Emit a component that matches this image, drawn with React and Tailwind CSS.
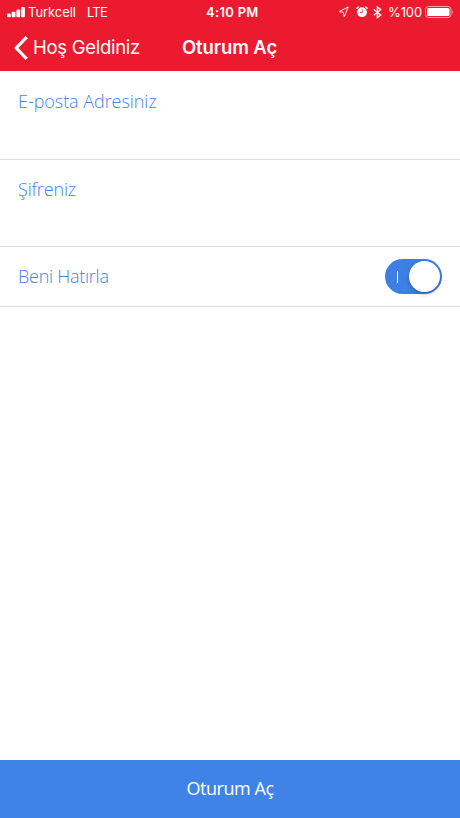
function StatusBar() {
  return (
    <div className="flex h-6 items-center pl-[7px] pr-[4px] text-[13px] leading-6">
      <svg className="mr-[3px] h-[11px] w-[18px] shrink-0" viewBox="0 0 18 11" fill="white">
        <rect x="0" y="6.5" width="3.8" height="3.8" rx="1" />
        <rect x="4.7" y="4.8" width="3.8" height="5.5" rx="1" />
        <rect x="9.4" y="2.6" width="3.8" height="7.7" rx="1" />
        <rect x="14.1" y="0" width="3.8" height="10.3" rx="1" />
      </svg>
      <span className="w-[59px] whitespace-nowrap tracking-[-0.05px]">Turkcell</span>
      <span className="w-[119px] tracking-[-0.8px]">LTE</span>
      <span className="w-[132px] whitespace-nowrap font-semibold tracking-[0.3px]">4:10 PM</span>
      <svg className="h-[12px] w-[11px] shrink-0" viewBox="0 0 11 12" fill="none" stroke="white" strokeWidth="1" strokeLinejoin="round">
        <path d="M10.2 1 L1 5.6 L5.2 6.3 L6.3 10.6 Z" />
      </svg>
      <svg className="ml-[7px] h-[12px] w-[12px] shrink-0" viewBox="0 0 12 12">
        <circle cx="6" cy="6.2" r="4.9" fill="white" />
        <path d="M0.9 2.2 L2.3 1 M11.1 2.2 L9.7 1" stroke="white" strokeWidth="1.4" strokeLinecap="round" />
        <path d="M6.2 3.2 V6.5 H3.9" stroke="#ec1a2e" strokeWidth="0.8" fill="none" />
      </svg>
      <svg className="ml-[5px] h-[13px] w-[9px] shrink-0" viewBox="0 0 9 13" fill="none" stroke="white" strokeWidth="1.35">
        <path d="M0.8 3.4 L7.7 9 L4.4 11.6 V1 L7.7 3.6 L0.8 9.2" />
      </svg>
      <span className="ml-[6px] w-[37px] whitespace-nowrap tracking-[-0.1px]">%100</span>
      <svg className="h-[12px] w-[29px] shrink-0" viewBox="0 0 29 12" fill="none">
        <rect x="0.5" y="0.5" width="25.5" height="11" rx="3" stroke="white" strokeOpacity="0.6" />
        <rect x="2" y="2" width="22.5" height="8" rx="1.6" fill="white" />
        <path d="M27.3 4 Q28.8 6 27.3 8 Z" fill="white" fillOpacity="0.7" />
      </svg>
    </div>
  );
}

export default function App() {
  return (
    <div className="flex h-[818px] w-[460px] flex-col overflow-hidden bg-white font-['Open_Sans',sans-serif] text-[18px] font-light text-[#4583e4]">
      <header className="h-[71px] shrink-0 bg-[#ec1a2e] font-['Inter',sans-serif] font-normal text-white">
        <StatusBar />
        <div className="flex h-[47px] items-center pl-[14px]">
          <svg className="h-6 w-[14px] shrink-0" viewBox="0 0 14 24" fill="none" stroke="white" strokeWidth="3.2">
            <path d="M12.7 1.2 L2.3 12 L12.7 22.8" />
          </svg>
          <span className="ml-[5px] w-[149px] whitespace-nowrap text-[18.5px] tracking-[-0.28px]">Hoş Geldiniz</span>
          <h1 className="whitespace-nowrap text-[18.5px] font-semibold tracking-[-0.1px]">Oturum Aç</h1>
        </div>
      </header>
      <main className="flex-1">
        <label className="block h-[89px] border-b border-[#d3e1f7] pl-[18px] pt-[18px] leading-6 tracking-[-0.05px]">E-posta Adresiniz</label>
        <label className="block h-[87px] border-b border-[#d3e1f7] pl-[18px] pt-[17px] leading-6 tracking-[-0.15px]">Şifreniz</label>
        <div className="flex h-[60px] items-center justify-between border-b border-[#d3e1f7] pl-[18px] pr-[18px]">
          <span className="tracking-[-0.25px]">Beni Hatırla</span>
          <button className="flex h-[35px] w-[57px] items-center justify-between rounded-full bg-[#3d80e2] pl-[12px] pr-[2px]">
            <span className="h-[12px] w-px bg-white" />
            <span className="size-[31px] rounded-full bg-white shadow-[0_2px_4px_rgba(0,0,0,0.25)]" />
          </button>
        </div>
      </main>
      <button className="h-[58px] shrink-0 bg-[#3f83e6] pb-[2px] font-normal tracking-[-0.45px] text-white">Oturum Aç</button>
    </div>
  );
}
